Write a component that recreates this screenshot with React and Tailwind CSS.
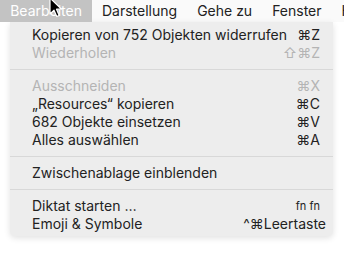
import React from 'react';

const items = [
  { label: 'Kopieren von 752 Objekten widerrufen', key: '⌘Z' },
  { label: 'Wiederholen', key: '⇧⌘Z', disabled: true },
  'sep',
  { label: 'Ausschneiden', key: '⌘X', disabled: true },
  { label: '„Resources“ kopieren', key: '⌘C' },
  { label: '682 Objekte einsetzen', key: '⌘V' },
  { label: 'Alles auswählen', key: '⌘A' },
  'sep',
  { label: 'Zwischenablage einblenden' },
  'sep',
  { label: 'Diktat starten …', key: 'fn fn', small: true },
  { label: 'Emoji & Symbole', key: '^⌘Leertaste', wide: true },
];

const MenuRow = ({ item }) => (
  <div
    className={`h-[18px] flex items-center justify-between pl-[22px] pr-[13px] ${
      item.disabled ? 'text-[#b4b4b4]' : 'text-[#222222]'
    }`}
  >
    <span>{item.label}</span>
    {item.key && (
      <span
        className={`${item.small ? 'text-[11px]' : ''} ${item.wide ? '-mr-[6px]' : ''}`}
      >
        {item.key}
      </span>
    )}
  </div>
);

const App = () => {
  return (
    <div className="relative w-[344px] h-[262px] overflow-hidden bg-white font-['Inter','DejaVu_Sans',sans-serif] text-[14px] leading-[18px]">
      {/* menu bar */}
      <div className="h-[22px] flex items-center bg-[#fafafa] text-[#222222] whitespace-nowrap">
        <span className="-ml-[8px] w-[18px] text-[#8fbbe8]">e</span>
        <span className="h-full flex items-center px-[10px] bg-[#c3c3c3] text-white">Bearbeiten</span>
        <span className="px-[10px]">Darstellung</span>
        <span className="px-[10px]">Gehe zu</span>
        <span className="px-[10px]">Fenster</span>
        <span className="pl-[10px]">Hilfe</span>
      </div>

      {/* dropdown */}
      <div className="ml-[10px] w-[323px] bg-[#ededed] rounded-b-[5px] shadow-[0_2px_6px_rgba(0,0,0,0.12)] pt-[4px] pb-[3px] whitespace-nowrap">
        {items.map((item, i) =>
          item === 'sep' ? (
            <div key={i} className="h-[15px] flex items-center">
              <div className="w-full h-px bg-[#d8d8d8]" />
            </div>
          ) : (
            <MenuRow key={i} item={item} />
          )
        )}
      </div>

      {/* cursor */}
      <svg className="absolute left-[49px] top-[-3px]" width="14" height="22" viewBox="0 0 14 22">
        <path
          d="M1 1 L1 17 L5 13.2 L7.8 19.5 L10.2 18.4 L7.5 12.2 L12.6 12.2 Z"
          fill="#000"
          stroke="#fff"
          strokeWidth="1.2"
          strokeLinejoin="round"
        />
      </svg>
    </div>
  );
};

export default App;
